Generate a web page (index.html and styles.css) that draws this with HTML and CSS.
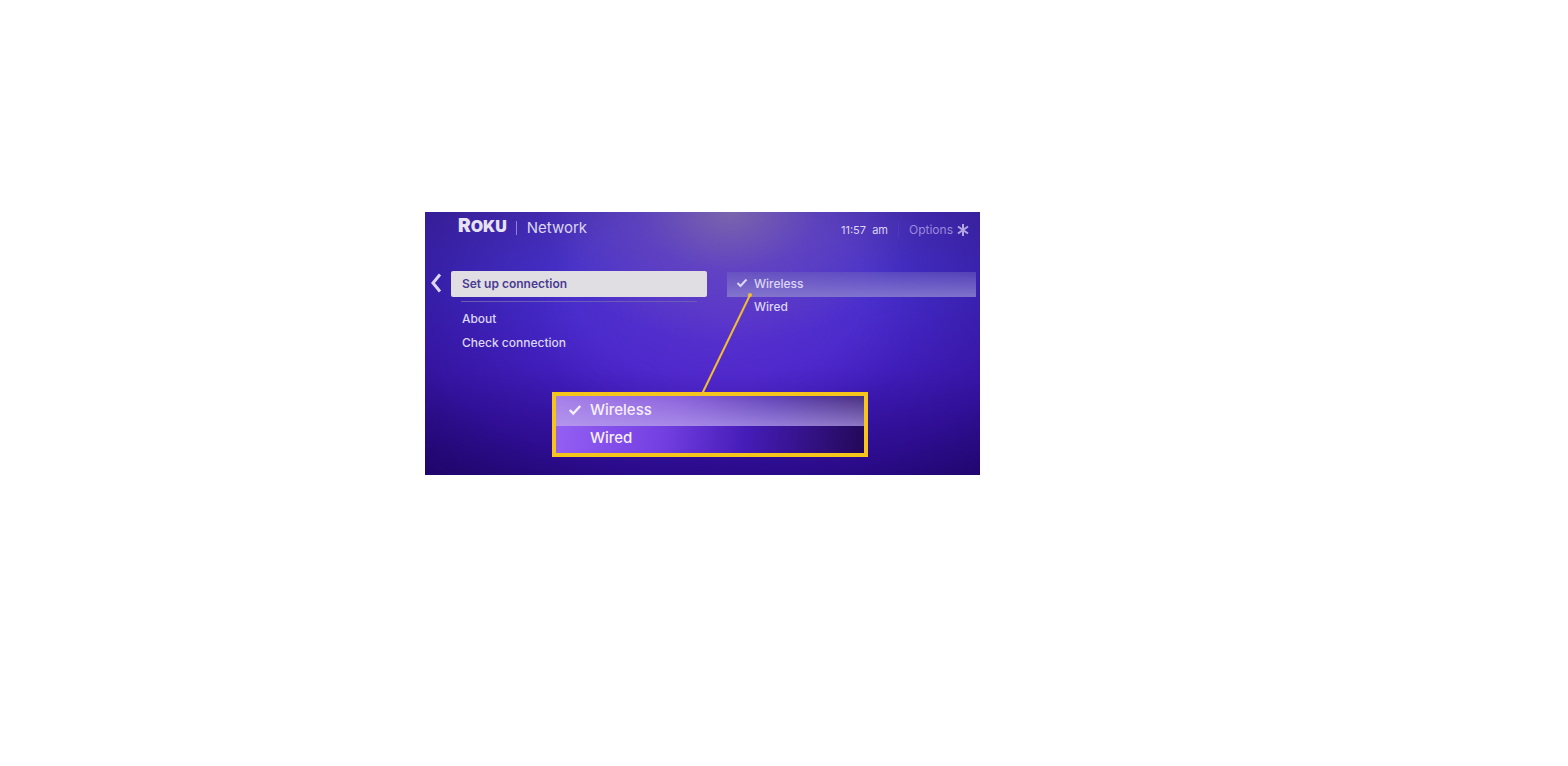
FILE: index.html
```
<!DOCTYPE html>
<html lang="en">
<head>
    <meta charset="utf-8" />
    <title>Roku Network</title>
    <link rel="stylesheet" href="styles.css">
</head>
<body>

<main class="screen">
    <header class="header">
        <div class="logo">R<span>OKU</span></div>
        <h1 class="title">Network</h1>
        <div class="status">
            <span class="time">11:57&nbsp; am</span>
            <button class="options" type="button">Options
                <svg width="12" height="14" viewBox="0 0 12 14"><path d="M6 1V13M1 3.500L11 10.500M11 3.500L1 10.500" /></svg>
            </button>
        </div>
    </header>

    <div class="panels">
        <button class="back" type="button" aria-label="Back">
            <svg width="12" height="20" viewBox="0 0 12 20"><path d="M10 1.500L3 10L10 18.500" /></svg>
        </button>
        <nav class="menu">
            <button class="current" type="button">Set up connection</button>
            <hr />
            <button type="button">About</button>
            <button type="button">Check connection</button>
        </nav>
        <div class="choices">
            <button class="current" type="button">
                <svg class="check" viewBox="0 0 12 10"><path d="M1.500 5L4.500 8L10.500 1.500" /></svg>Wireless
            </button>
            <button type="button">Wired</button>
        </div>
    </div>

    <!-- enlarged copy of the choices -->
    <div class="callout">
        <svg class="pointer" width="52" height="104" viewBox="0 0 52 104">
            <path d="M50 3L2 102" />
            <circle cx="50" cy="3" r="2" />
            <circle cx="2" cy="102" r="2" />
        </svg>
        <div class="row current">
            <svg class="check" viewBox="0 0 12 10"><path d="M1.500 5L4.500 8L10.500 1.500" /></svg>Wireless
        </div>
        <div class="row">Wired</div>
    </div>
</main>

</body>
</html>
```
FILE: styles.css
```
* {
    box-sizing: border-box;
}
body {
    margin: 0;
    padding: 212px 0;
    background: #fff;
    font-family: Inter, "Liberation Sans", sans-serif;
}
button {
    margin: 0;
    padding: 0;
    border: 0;
    background: none;
    color: inherit;
    font: inherit;
    text-align: left;
}
svg {
    fill: none;
    stroke: currentColor;
}
.screen {
    width: 35.4%;
    min-width: 520px;
    margin-left: 27.1%;
    padding-bottom: 18px;
    color: #dcd6f4;
    background:
        radial-gradient(ellipse 34% 50% at 55% 0, rgba(134,112,168,.8), rgba(115,84,185,.45) 45%, transparent),
        radial-gradient(ellipse 34% 50% at 54% 38%, rgba(105,58,205,.5), transparent),
        radial-gradient(ellipse 75% 95% at 53% 30%, transparent 35%, rgba(30,4,110,.45) 75%, rgba(24,2,90,.75)),
        linear-gradient(#4a34bc, #4530cc 25%, #4823cc 60%, #3e18b4 80%, #3510a0);
}

/* header */
.header {
    display: flex;
    height: 59px;
    padding: 4px 11px 0 33px;
}
.logo {
    color: #e6e2f4;
    font-size: 19px;
    font-weight: 900;
    line-height: 20px;
}
.logo span {
    font-size: 16px;
}
.title {
    height: 14px;
    margin: 5px 0 0 9px;
    padding-left: 10px;
    border-left: 1px solid #9282d4;
    font-size: 15px;
    font-weight: 400;
    line-height: 14px;
}
.status {
    display: flex;
    margin: 6px 0 0 auto;
    font-size: 11px;
    line-height: 16px;
    height: 16px;
}
.options {
    display: flex;
    align-items: center;
    gap: 4px;
    margin-left: 10px;
    padding-left: 10px;
    border-left: 1px solid #4c38bc;
    color: #9c8adc;
    font-size: 12px;
}
.options svg {
    color: #b4a6e2;
    stroke-width: 2;
}

/* menus */
.panels {
    display: grid;
    grid-template-columns: 26px 256fr 269fr;
    padding-right: 4px;
}
.back {
    height: 26px;
    padding: 2px 0 0 5px;
}
.back svg {
    stroke-width: 3;
}
.menu,
.choices {
    display: flex;
    flex-direction: column;
    font-size: 12px;
    font-weight: 500;
}
.menu button {
    height: 24px;
    padding-left: 11px;
}
.menu .current {
    height: 26px;
    padding-bottom: 2px;
    border-radius: 2px;
    background: #e0dee2;
    color: #4a3b94;
    font-weight: 600;
}
.menu hr {
    width: 92%;
    margin: 4px auto;
    border: 0;
    border-top: 1px solid #6d5bb8;
}
.choices {
    margin: 1px 0 0 20px;
}
.choices button {
    height: 20px;
    padding: 0 0 2px 27px;
}
.choices .current {
    display: flex;
    align-items: center;
    height: 25px;
    padding: 0 0 3px 9px;
    background: linear-gradient(rgba(110,96,190,.5), rgba(134,122,206,.9));
}
.check {
    width: 12px;
    height: 10px;
    margin-right: 6px;
    stroke-width: 2;
}

/* callout */
.callout {
    position: relative;
    width: 57%;
    margin: 38px 0 0 127px;
    border: 4px solid #f6c51c;
    background: linear-gradient(100deg, #9561f4, #7540e2 35%, #451cb8 62%, #230858);
    color: #f7f0ff;
    font-size: 15px;
    font-weight: 500;
}
.row {
    height: 27px;
    padding-left: 34px;
    line-height: 24px;
}
.row.current {
    display: flex;
    align-items: center;
    height: 30px;
    padding: 0 0 2px 12px;
    background:
        linear-gradient(rgba(180,160,240,0), rgba(186,164,240,.6)),
        linear-gradient(90deg, #a67fe8, #8c62dc 40%, #6244b8 70%, #483080);
}
.row .check {
    width: 14px;
    height: 12px;
    margin-right: 8px;
}
.pointer {
    position: absolute;
    left: 144px;
    bottom: 100%;
    color: #f2bd30;
    stroke-width: 2;
}
.pointer circle {
    fill: currentColor;
    stroke: none;
}
```
